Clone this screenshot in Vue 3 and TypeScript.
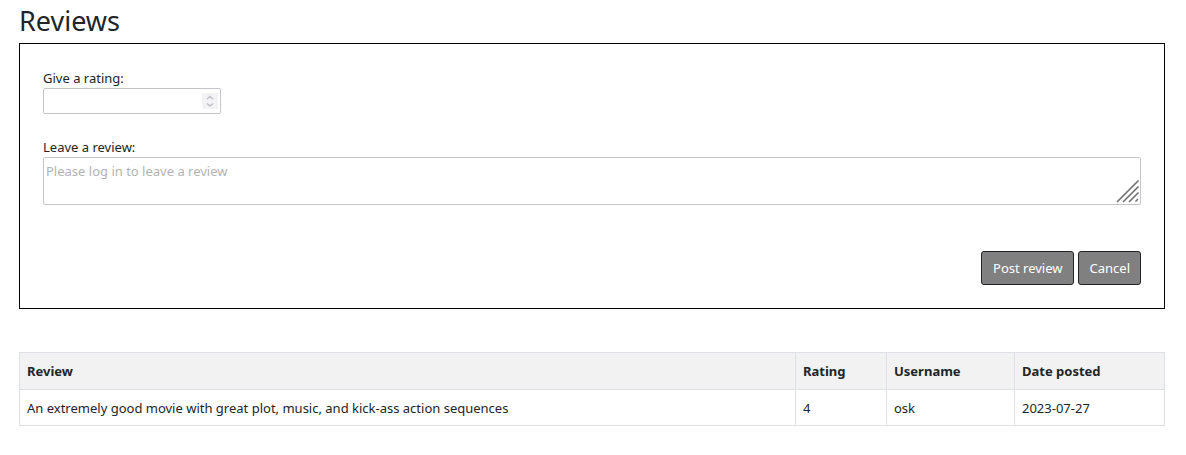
<script setup lang="ts">
import { ref } from 'vue'

interface Review {
  text: string
  rating: number
  username: string
  posted: string
}

const rating = ref<number | null>(null)
const comment = ref('')

const reviews: Review[] = [
  {
    text: 'An extremely good movie with great plot, music, and kick-ass action sequences',
    rating: 4,
    username: 'osk',
    posted: '2023-07-27',
  },
]

function reset(): void {
  rating.value = null
  comment.value = ''
}
</script>

<template>
  <main class="reviews">
    <h2>Reviews</h2>

    <form class="review-form" @submit.prevent>
      <div class="field">
        <label for="rating">Give a rating:</label>
        <div class="number-box">
          <input id="rating" v-model="rating" type="number" min="1" max="5" disabled />
          <span class="spinner" aria-hidden="true">
            <svg width="16" height="16" viewBox="0 0 16 16">
              <path d="M5 6 L8 3.5 L11 6 M5 10.5 L8 13 L11 10.5" />
            </svg>
          </span>
        </div>
      </div>

      <div class="field">
        <label for="comment">Leave a review:</label>
        <div class="text-box">
          <textarea
            id="comment"
            v-model="comment"
            placeholder="Please log in to leave a review"
            disabled
          ></textarea>
          <svg class="grip" width="24" height="24" viewBox="0 0 24 24" aria-hidden="true">
            <path d="M1.5 21.5 L22 1 M7.5 21.5 L22 7 M13.5 21.5 L22 13 M20 21 L21.5 19.5" />
          </svg>
        </div>
      </div>

      <div class="actions">
        <button type="submit">Post review</button>
        <button type="button" @click="reset">Cancel</button>
      </div>
    </form>

    <table>
      <colgroup>
        <col />
        <col class="col-rating" />
        <col class="col-user" />
        <col class="col-date" />
      </colgroup>
      <thead>
        <tr>
          <th scope="col">Review</th>
          <th scope="col">Rating</th>
          <th scope="col">Username</th>
          <th scope="col">Date posted</th>
        </tr>
      </thead>
      <tbody>
        <tr v-for="review in reviews" :key="review.username">
          <td>{{ review.text }}</td>
          <td>{{ review.rating }}</td>
          <td>{{ review.username }}</td>
          <td>{{ review.posted }}</td>
        </tr>
      </tbody>
    </table>
  </main>
</template>

<style>
body {
  background: #fff;
}
</style>

<style scoped>
.reviews,
.reviews * {
  box-sizing: border-box;
}

.reviews {
  padding: 4px 21px 28px 19px;
  color: #212529;
  font-family: "Segoe UI", "Noto Sans", "Open Sans", sans-serif;
  font-size: 13px;
  line-height: 21px;
}

h2 {
  margin: 0 0 5px;
  font-size: 27px;
  font-weight: 400;
  line-height: 34px;
}

.review-form {
  margin-bottom: 43px;
  padding: 24px 23px 23px;
  border: 1px solid #000;
}

.field {
  margin-bottom: 23px;
}

label {
  display: block;
  line-height: 20px;
}

.number-box {
  position: relative;
  width: 178px;
}

input,
textarea {
  display: block;
  width: 100%;
  margin: 0;
  border: 1px solid #c4c4ca;
  border-radius: 2px;
  background: #fff;
  color: #212529;
  font: inherit;
  outline: none;
}

input {
  height: 26px;
  padding: 1px 22px 1px 2px;
  appearance: textfield;
}

.spinner {
  position: absolute;
  top: 5px;
  right: 3px;
  width: 16px;
  height: 16px;
  background: #f3f3f5;
}

.spinner svg {
  display: block;
  fill: none;
  stroke: #bfbfc5;
  stroke-width: 1.5;
}

.text-box {
  position: relative;
}

textarea {
  height: 48px;
  padding: 3px 2px;
  resize: none;
}

textarea::placeholder {
  color: #b3b3b3;
  opacity: 1;
}

.grip {
  position: absolute;
  right: 1px;
  bottom: 1px;
  fill: none;
  stroke: #737373;
  stroke-width: 1.7;
  stroke-linecap: round;
}

.actions {
  display: flex;
  justify-content: flex-end;
  gap: 4px;
  margin-top: 46px;
}

button {
  height: 34px;
  padding: 0 10px 0 11px;
  border: 1px solid #212529;
  border-radius: 3px;
  background: #808080;
  color: #fff;
  font: inherit;
}

table {
  width: 100%;
  border-collapse: collapse;
  table-layout: fixed;
}

.col-rating {
  width: 91px;
}

.col-user {
  width: 128px;
}

.col-date {
  width: 150px;
}

th,
td {
  padding: 7px;
  border: 1px solid #dee2e6;
  text-align: left;
}

th {
  background: #f2f2f2;
  font-weight: 700;
  line-height: 22px;
}

td {
  padding: 8px 7px 6px;
}
</style>
